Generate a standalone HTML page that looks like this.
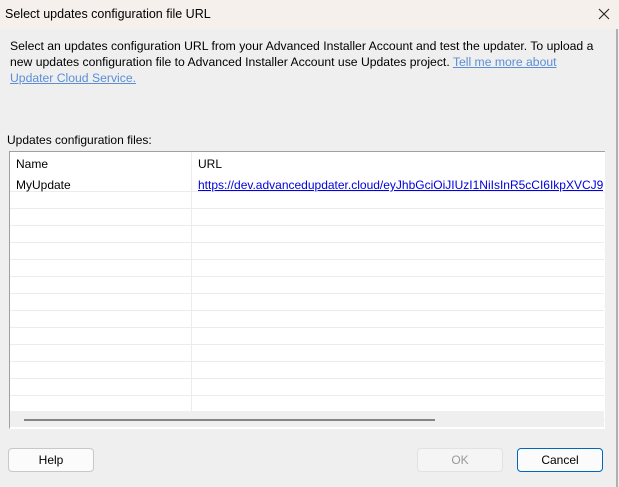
<html><head><style>
body{margin:0;width:619px;height:487px;background:#efefef;font-family:"Liberation Sans",sans-serif;font-size:12px;color:#000;position:relative;overflow:hidden}
.title{position:absolute;left:0;top:0;width:619px;height:29px;background:#f6f0ec}
.abs{position:absolute;white-space:nowrap}
a{color:#0000ee}
.btn{position:absolute;height:22px;border:1px solid #c8c8c8;border-radius:4px;background:#fbfbfb;text-align:center;line-height:22px;font-size:12px}
</style></head><body>
<div class="title"></div>
<div class="abs" style="left:5px;top:7px;font-size:12.5px">Select updates configuration file URL</div>
<svg class="abs" style="left:598px;top:8px" width="12" height="12"><path d="M1 1L11 11M11 1L1 11" stroke="#222" stroke-width="1.1"/></svg>
<div class="abs" style="left:616px;top:29px;width:2px;height:458px;background:#b0b0b0"></div>
<div class="abs" style="left:10px;top:38px;line-height:16px;white-space:normal;width:592px;font-size:12.2px">Select an updates configuration URL from your Advanced Installer Account and test the updater. To upload a new updates configuration file to Advanced Installer Account use Updates project. <a style="color:#5b8ed6;text-decoration:underline">Tell me more about Updater Cloud Service.</a></div>
<div class="abs" style="left:7px;top:133px">Updates configuration files:</div>
<div class="abs" style="left:9px;top:151px;width:595px;height:276px;background:#fff;border:1px solid #a0a0a0;border-right:none;border-bottom:1px solid #fff;
background-image:repeating-linear-gradient(to bottom,transparent 0,transparent 40px,#ececec 40px,#ececec 41px,transparent 41px,transparent 57px);"></div>
<div class="abs" style="left:10px;top:175px;width:594px;height:235px;background:repeating-linear-gradient(to bottom,#fff 0,#fff 16px,#ececec 16px,#ececec 17px)"></div>
<div class="abs" style="left:191px;top:152px;width:1px;height:259px;background:#ececec"></div>
<div class="abs" style="left:10px;top:411px;width:594px;height:16px;background:#efefef"></div>
<div class="abs" style="left:24px;top:419px;width:411px;height:2px;background:#858585"></div>
<div class="abs" style="left:16px;top:157px">Name</div>
<div class="abs" style="left:198px;top:157px">URL</div>
<div class="abs" style="left:16px;top:178px">MyUpdate</div>
<div class="abs" style="left:198px;top:178px;width:405px;overflow:hidden"><a style="text-decoration:underline;color:#0000e0">https://dev.advancedupdater.cloud/eyJhbGciOiJIUzI1NiIsInR5cCI6IkpXVCJ9.eyJ0IjoxNjk</a></div>
<div class="btn" style="left:8px;top:448px;width:84px">Help</div>
<div class="btn" style="left:417px;top:448px;width:84px;color:#999;border-color:#e2e2e2;background:#f5f5f5">OK</div>
<div class="btn" style="left:517px;top:448px;width:84px;border-color:#0067c0">Cancel</div>
</body></html>
